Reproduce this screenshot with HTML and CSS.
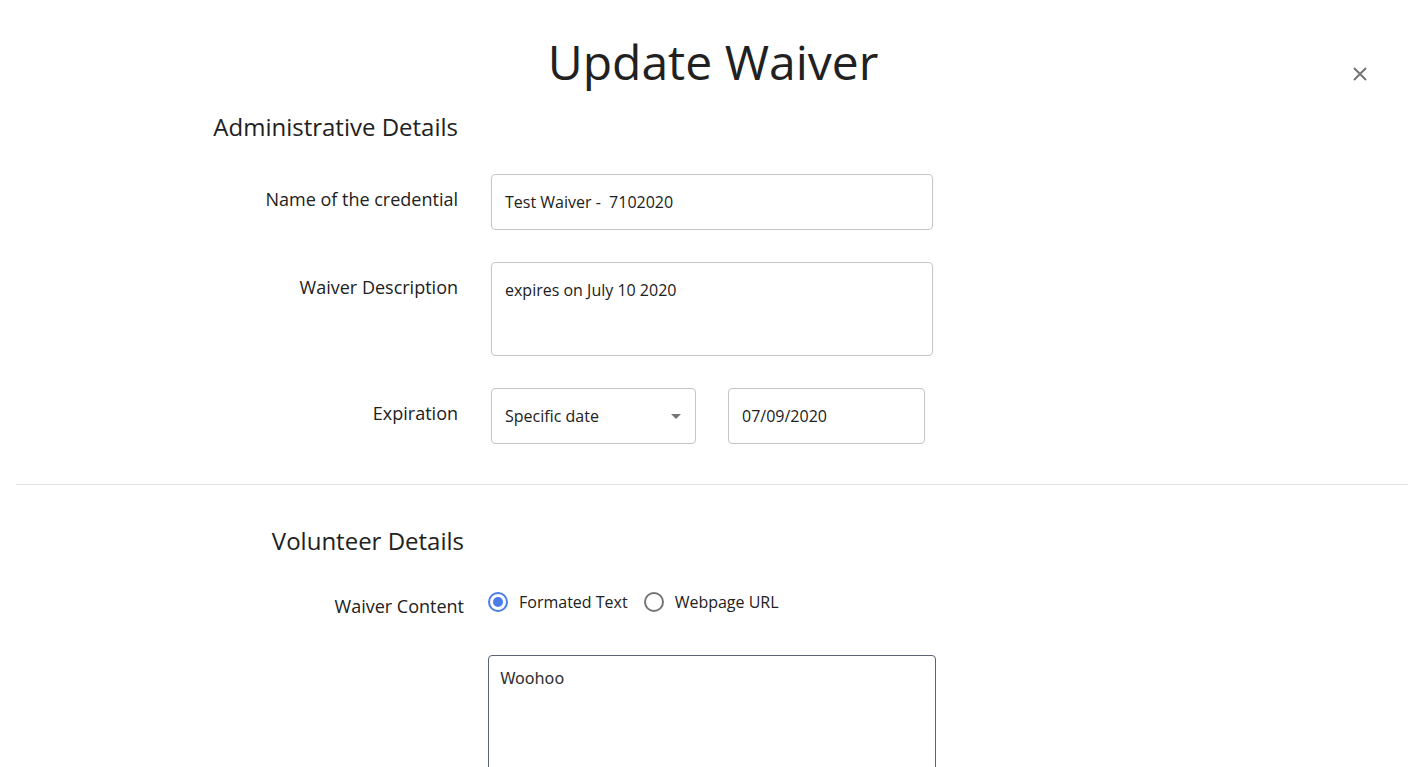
FILE: index.html
```html
<!DOCTYPE html>
<html lang="en">
<head>
  <meta charset="UTF-8" />
  <title>Update Waiver</title>
  <link rel="stylesheet" href="styles.css">
</head>
<body>
  <div class="dialog">
    <button class="close-btn" aria-label="Close">
      <svg width="14" height="14" viewBox="0 0 14 14"><path d="M1 1L13 13M13 1L1 13" stroke="#757575" stroke-width="2"/></svg>
    </button>
    <h1 class="title">Update Waiver</h1>

    <section class="section admin">
      <h2 class="section-title">Administrative Details</h2>
      <div></div>

      <label class="field-label">Name of the credential</label>
      <div class="field"><input class="input wide" value="Test Waiver -  7102020"></div>

      <label class="field-label">Waiver Description</label>
      <div class="field"><textarea class="input wide textarea">expires on July 10 2020</textarea></div>

      <label class="field-label">Expiration</label>
      <div class="field split">
        <div class="select">
          <span>Specific date</span>
          <span class="caret"></span>
        </div>
        <input class="input date" value="07/09/2020">
      </div>
    </section>

    <hr class="divider">

    <section class="section volunteer">
      <h2 class="section-title">Volunteer Details</h2>
      <div></div>

      <label class="field-label radio-label">Waiver Content</label>
      <div class="field radios">
        <label class="radio"><span class="dot checked"></span>Formated Text</label>
        <label class="radio"><span class="dot"></span>Webpage URL</label>
      </div>

      <div></div>
      <div class="field editor-row"><div class="editor">Woohoo</div></div>
    </section>
  </div>
</body>
</html>
```

FILE: styles.css
```css
body {
  margin: 0;
  background: #fff;
  color: #212121;
  font-family: 'Open Sans', sans-serif;
  overflow: hidden;
}
.dialog {
  position: relative;
  padding: 30px 18px 0 16px;
}
.close-btn {
  position: absolute;
  top: 67px;
  right: 59px;
  background: none;
  border: none;
  padding: 0;
  width: 14px;
  height: 14px;
}
.title {
  margin: 0;
  text-align: center;
  font-size: 48px;
  font-weight: 400;
  line-height: 64px;
  padding-left: 2px;
}
.section {
  display: grid;
  align-items: start;
  row-gap: 32px;
}
.admin {
  grid-template-columns: 442px auto;
  column-gap: 33px;
  margin-top: 17px;
}
.volunteer {
  grid-template-columns: 448px auto;
  column-gap: 24px;
  row-gap: 30px;
  margin-top: 40px;
}
.section-title {
  margin: 0 0 -1px;
  text-align: right;
  font-size: 24px;
  font-weight: 400;
  line-height: 32px;
}
.field-label {
  text-align: right;
  font-size: 18px;
  line-height: 24px;
  padding-top: 13px;
}
.field { display: flex; }
.split { gap: 32px; }
.input {
  box-sizing: border-box;
  height: 56px;
  border: 1px solid #c4c4c4;
  border-radius: 4px;
  padding: 0 13px;
  font-family: 'Open Sans', sans-serif;
  font-size: 16px;
  color: #212121;
  background: #fff;
}
.wide { width: 442px; }
.textarea {
  height: 94px;
  padding-top: 15px;
  resize: none;
  line-height: 24px;
}
.date { width: 197px; }
.select {
  box-sizing: border-box;
  width: 205px;
  height: 56px;
  border: 1px solid #c4c4c4;
  border-radius: 4px;
  padding: 0 14px 0 13px;
  display: flex;
  align-items: center;
  justify-content: space-between;
  font-size: 16px;
}
.caret {
  width: 0;
  height: 0;
  border-left: 5px solid transparent;
  border-right: 5px solid transparent;
  border-top: 5px solid #757575;
}
.divider {
  margin: 40px 0 0;
  border: none;
  border-top: 1px solid #e0e0e0;
}
.radio-label { padding-top: 8px; }
.radios {
  height: 32px;
  gap: 16px;
  align-items: center;
  font-size: 16px;
}
.radio {
  display: flex;
  align-items: center;
  gap: 11px;
}
.dot {
  box-sizing: border-box;
  width: 20px;
  height: 20px;
  border: 2px solid #757575;
  border-radius: 50%;
  position: relative;
}
.dot.checked { border-color: #4a7de8; }
.dot.checked::after {
  content: '';
  position: absolute;
  top: 3px;
  left: 3px;
  width: 10px;
  height: 10px;
  border-radius: 50%;
  background: #4a7de8;
}
.editor-row { margin-top: 7px; }
.editor {
  box-sizing: border-box;
  width: 448px;
  height: 200px;
  border: 1px solid #5b6377;
  border-radius: 4px;
  padding: 11px;
  font-family: 'DejaVu Sans', sans-serif;
  font-size: 16px;
  line-height: 24px;
  color: #333;
}
```
